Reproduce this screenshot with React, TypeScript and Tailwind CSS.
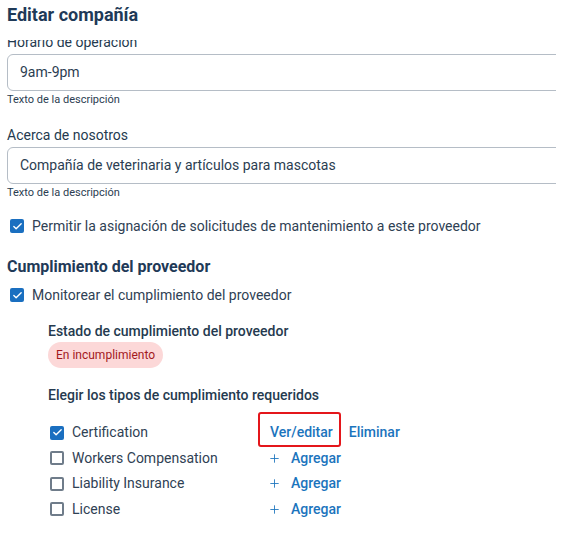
import { Check, Plus } from "lucide-react";

interface Requisito {
  nombre: string;
  activo: boolean;
}

const requisitos: Requisito[] = [
  { nombre: "Certification", activo: true },
  { nombre: "Workers Compensation", activo: false },
  { nombre: "Liability Insurance", activo: false },
  { nombre: "License", activo: false },
];

const Casilla = ({ marcada }: { marcada: boolean }) =>
  marcada ? (
    <span className="flex h-[14px] w-[14px] items-center justify-center rounded-[2px] bg-[#1a6fc0]">
      <Check size={11} strokeWidth={3} className="text-white" />
    </span>
  ) : (
    <span className="h-[14px] w-[14px] rounded-[2px] border-2 border-[#6f7c8a]" />
  );

const Campo = ({ label, valor }: { label: string; valor: string }) => (
  <div>
    <div className="mb-[2px] text-[14px] leading-[20px] text-[#253a4f]">{label}</div>
    <div className="flex h-[37px] w-[600px] items-center rounded-[6px] border border-[#b5bdc6] pl-[12px] text-[14px] text-[#2b3d51]">
      {valor}
    </div>
    <div className="mt-[1px] text-[11px] leading-[16px] text-[#2b3d51]">Texto de la descripción</div>
  </div>
);

const App = () => {
  return (
    <div className="flex h-[533px] w-[565px] flex-col bg-white font-['Roboto',sans-serif]">
      {/* Encabezado */}
      <div className="h-[40px] shrink-0 px-[7px] pt-[3px] text-[18px] font-bold leading-[24px] text-[#1f3a58]">
        Editar compañía
      </div>

      {/* Contenido desplazable */}
      <div className="w-[556px] flex-1 overflow-hidden">
        <div className="-mt-[8px] px-[7px]">
          <Campo label="Horario de operación" valor="9am-9pm" />
          <div className="mt-[17px]">
            <Campo label="Acerca de nosotros" valor="Compañía de veterinaria y artículos para mascotas" />
          </div>

          <div className="mt-[15px] flex h-[20px] items-center gap-[8px] pl-[3px] text-[14px] text-[#2f4154]">
            <Casilla marcada />
            Permitir la asignación de solicitudes de mantenimiento a este proveedor
          </div>

          <div className="mt-[20px] text-[16px] font-bold leading-[22px] text-[#1f3a58]">
            Cumplimiento del proveedor
          </div>
          <div className="mt-[7px] flex h-[20px] items-center gap-[8px] pl-[3px] text-[14px] text-[#2f4154]">
            <Casilla marcada />
            Monitorear el cumplimiento del proveedor
          </div>

          <div className="pl-[41px]">
            <div className="mt-[16px] text-[14px] font-medium leading-[20px] text-[#253a4f]">
              Estado de cumplimiento del proveedor
            </div>
            <span className="mt-[1px] inline-flex h-[26px] items-center rounded-full bg-[#fcd8d8] px-[8px] text-[12px] text-[#a3181d]">
              En incumplimiento
            </span>
            <div className="mt-[17px] text-[14px] font-medium leading-[20px] text-[#253a4f]">
              Elegir los tipos de cumplimiento requeridos
            </div>

            <div className="mt-[15px]">
              {requisitos.map((r) => (
                <div key={r.nombre} className="flex h-[25.5px] items-center text-[14px]">
                  <div className="flex w-[222px] items-center gap-[8px] pl-[2px] text-[#2f4154]">
                    <Casilla marcada={r.activo} />
                    {r.nombre}
                  </div>
                  {r.activo ? (
                    <div className="flex items-center gap-[16px] font-medium text-[#1b74bd]">
                      <span className="relative">
                        Ver/editar
                        <span className="absolute -bottom-[4px] -left-[12px] -right-[8px] -top-[10px] rounded-[3px] border-2 border-[#e4161b]" />
                      </span>
                      <span>Eliminar</span>
                    </div>
                  ) : (
                    <div className="-ml-[2px] flex items-center gap-[10px] font-medium text-[#1b74bd]">
                      <Plus size={13} strokeWidth={1.6} />
                      <span>Agregar</span>
                    </div>
                  )}
                </div>
              ))}
            </div>
          </div>
        </div>
      </div>
    </div>
  );
};

export default App;
